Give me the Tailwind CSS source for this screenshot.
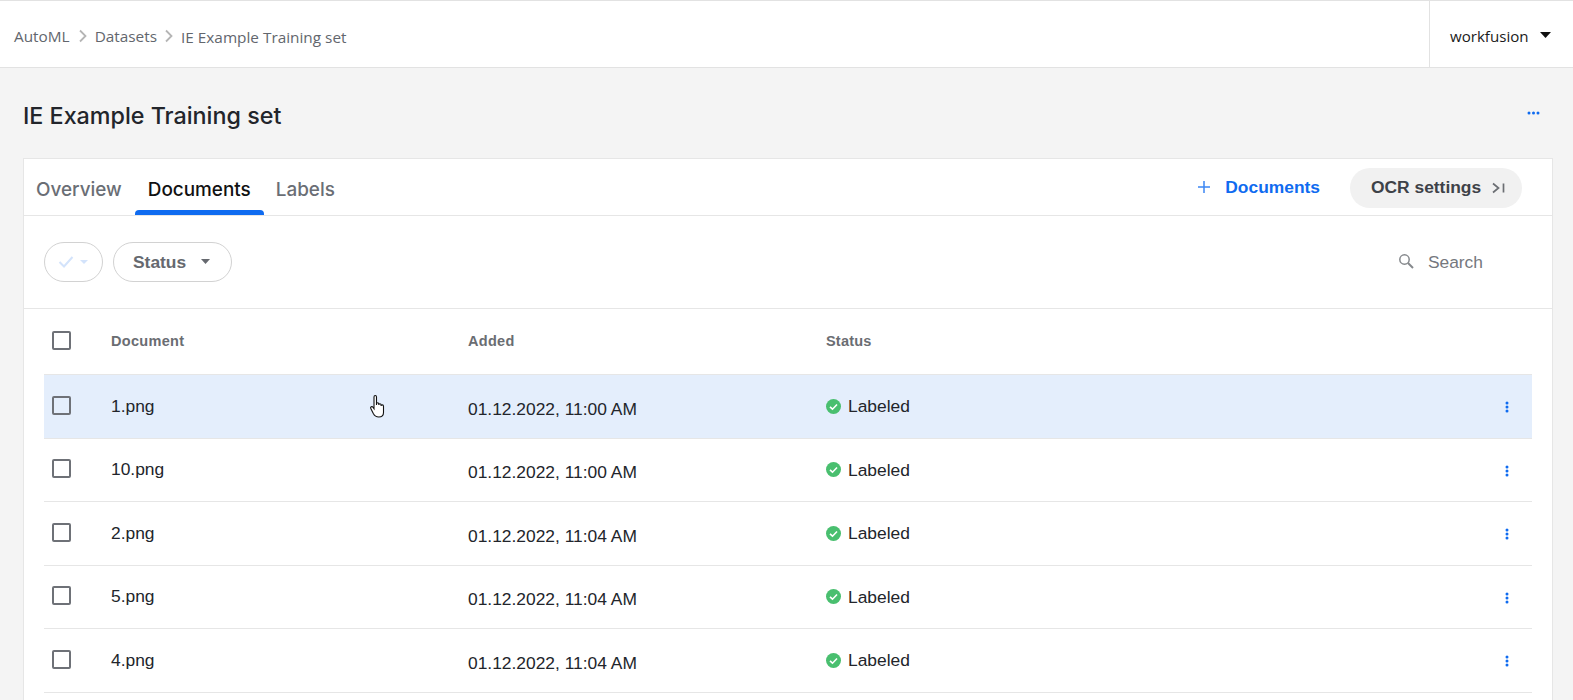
<!DOCTYPE html>
<html lang="en">
<head>
    <meta charset="UTF-8">
    <title>IE Example Training set</title>
    <script src="https://cdn.jsdelivr.net/npm/@tailwindcss/browser@4"></script>
</head>
<body class="bg-[#f4f4f4] h-[700px] overflow-hidden font-['Liberation_Sans',sans-serif] text-[#22252b]">
    <header class="h-[68px] bg-white border-t border-b border-[#e2e2e2] flex justify-between">
        <nav class="flex items-center pl-[14px] pt-[6px] font-['Open_Sans',sans-serif] text-[15.350px] text-[#62666d]">
            <span>AutoML</span>
            <svg class="ml-[8px] mr-[7px] mb-[3px]" width="10" height="14" viewBox="0 0 10 14" fill="none" stroke="#b5b5b5" stroke-width="1.800"><path d="M2 1.500l5.500 5.500L2 12.500"/></svg>
            <span>Datasets</span>
            <svg class="ml-[7px] mr-[7px] mb-[3px]" width="10" height="14" viewBox="0 0 10 14" fill="none" stroke="#b5b5b5" stroke-width="1.800"><path d="M2 1.500l5.500 5.500L2 12.500"/></svg>
            <span class="pt-[1px]">IE Example Training set</span>
        </nav>
        <div class="w-[144px] border-l border-[#e2e2e2] flex items-center pl-[20px] pt-[5px] font-['Open_Sans',sans-serif] text-[15.100px] text-[#1a1a1a]">
            <span>workfusion</span>
            <svg class="ml-[11px] mb-[3px]" width="11" height="6" viewBox="0 0 11 6" fill="#111"><path d="M0 0h11L5.500 6z"/></svg>
        </div>
    </header>

    <main class="pl-[23px] pr-[20px]">
        <div class="h-[90px] flex items-center justify-between">
            <h1 class="font-['Inter',sans-serif] text-[23.300px] font-medium text-[#22252b] mt-[7px]">IE Example Training set</h1>
            <svg class="mr-[13px]" width="13" height="4" viewBox="0 0 13 4" fill="#0f6bf0"><circle cx="2" cy="2" r="1.500"/><circle cx="6.500" cy="2" r="1.500"/><circle cx="11" cy="2" r="1.500"/></svg>
        </div>

        <section class="bg-white border border-[#e6e6e6] pb-[20px]">
            <div class="h-[57px] flex justify-between border-b border-[#e6e6e6]">
                <div class="flex pl-[12px] font-['Inter',sans-serif] text-[18.900px] font-medium text-[#6a6e75]">
                    <div class="flex items-center pt-[6px]">Overview</div>
                    <div class="flex items-center pt-[6px] px-[13px] ml-[13px] text-[#111] relative">Documents
                        <span class="absolute left-0 right-0 bottom-0 h-[5px] bg-[#0f6bf0] rounded-t-[4px]"></span>
                    </div>
                    <div class="flex items-center pt-[6px] ml-[12px]">Labels</div>
                </div>
                <div class="flex items-center pr-[30px] pt-[1px] gap-[30px] text-[17.400px] font-bold">
                    <div class="flex items-center gap-[14px] text-[#0f6bf0]">
                        <svg width="14" height="14" viewBox="0 0 14 14" stroke="#3d87f3" stroke-width="1.500"><path d="M7 1v12M1 7h12"/></svg>
                        <span>Documents</span>
                    </div>
                    <div class="h-[40px] w-[172px] rounded-full bg-[#f1f1f1] flex items-center pl-[21px] text-[#3e4248]">
                        <span>OCR settings</span>
                        <svg class="ml-[11px]" width="13" height="12" viewBox="0 0 13 12" fill="none" stroke="#6b6e73" stroke-width="1.700"><path d="M1 1.500L6.500 6 1 10.500M11.500 1.500v9"/></svg>
                    </div>
                </div>
            </div>

            <div class="h-[93px] flex items-center justify-between border-b border-[#e6e6e6] pl-[20px] pr-[69px] pb-[1px]">
                <div class="flex gap-[10px]">
                    <div class="w-[59px] h-[40px] rounded-full border border-[#d2d2d2] flex items-center pl-[13px]">
                        <svg width="16" height="13" viewBox="0 0 16 13" fill="none" stroke="#d3e3fb" stroke-width="2"><path d="M1.500 7l4.500 4.500L14.500 2"/></svg>
                        <svg class="ml-[6px]" width="8" height="4" viewBox="0 0 8 4" fill="#d3e3fb"><path d="M0 0h8L4 4z"/></svg>
                    </div>
                    <div class="w-[119px] h-[40px] rounded-full border border-[#d2d2d2] flex items-center pl-[19px] text-[17.400px] font-bold text-[#66696f]">
                        <span class="mt-[1px]">Status</span>
                        <svg class="ml-[15px]" width="9" height="5" viewBox="0 0 9 5" fill="#66696f"><path d="M0 0h9L4.500 5z"/></svg>
                    </div>
                </div>
                <div class="flex items-center gap-[14px] text-[17.400px] text-[#75787e]">
                    <svg width="16" height="16" viewBox="0 0 16 16" fill="none" stroke="#85888c" stroke-width="1.500"><circle cx="6.500" cy="6.500" r="4.700"/><path d="M10 10l5 5" stroke-width="2"/></svg>
                    <span class="mt-[1px]">Search</span>
                </div>
            </div>

            <div class="px-[20px]">
                <div class="h-[65px] flex items-center">
                    <span class="w-[67px] pl-[8px] mb-[2px]"><span class="block w-[19px] h-[19px] border-2 border-[#6e7177] rounded-[2px]"></span></span>
                    <span class="w-[357px] mt-[1px] text-[14.500px] tracking-[0.3px] font-bold text-[#6a6d72]">Document</span>
                    <span class="w-[358px] mt-[1px] text-[14.500px] tracking-[0.3px] font-bold text-[#6a6d72]">Added</span>
                    <span class="mt-[1px] text-[14.500px] tracking-[0.2px] font-bold text-[#6a6d72]">Status</span>
                </div>

                <div class="h-[65px] flex items-center bg-[#e4eefc] border-t border-b border-[#e6e6e6] relative">
                    <span class="w-[67px] pl-[8px] mb-[3px]"><span class="block w-[19px] h-[19px] border-2 border-[#6e7177] rounded-[2px]"></span></span>
                    <span class="w-[357px] text-[17.400px] mb-[1px]">1.png</span>
                    <span class="w-[358px] text-[17.400px] mt-[5px]">01.12.2022, 11:00 AM</span>
                    <span class="flex items-center gap-[7px] text-[17.400px]"><svg width="15" height="15" viewBox="0 0 15 15"><circle cx="7.500" cy="7.500" r="7.500" fill="#49bf6f"/><path d="M4 7.800l2.500 2.400L11 5.500" fill="none" stroke="#fff" stroke-width="1.600"/></svg>Labeled</span>
                    <svg class="ml-auto mr-[23px] mt-[1px]" width="4" height="12" viewBox="0 0 4 12" fill="#0f6bf0"><circle cx="2" cy="2" r="1.500"/><circle cx="2" cy="6" r="1.500"/><circle cx="2" cy="10" r="1.500"/></svg>
                    <svg class="absolute left-[325px] top-[19px]" width="18" height="25" viewBox="0 0 18 25" fill="#fff" stroke="#111" stroke-width="1.100"><path d="M5 3c0-2 2.500-2 2.500 0v8l0-1c0-1.600 2.300-1.600 2.300 0v1c0-1.600 2.300-1.600 2.300 0v1c0-1.500 2.400-1.500 2.400 0.300v6.200c0 3-2 4.500-4.700 4.500-2.800 0-4.300-1.300-5.500-3.500l-2.500-5c-.8-1.500 1.200-2.600 2.200-1.200l1 1.500z"/></svg>
                </div>

                <div class="h-[63px] flex items-center border-b border-[#e6e6e6]">
                    <span class="w-[67px] pl-[8px] mb-[3px]"><span class="block w-[19px] h-[19px] border-2 border-[#6e7177] rounded-[2px]"></span></span>
                    <span class="w-[357px] text-[17.400px] mb-[1px]">10.png</span>
                    <span class="w-[358px] text-[17.400px] mt-[5px]">01.12.2022, 11:00 AM</span>
                    <span class="flex items-center gap-[7px] text-[17.400px]"><svg width="15" height="15" viewBox="0 0 15 15"><circle cx="7.500" cy="7.500" r="7.500" fill="#49bf6f"/><path d="M4 7.800l2.500 2.400L11 5.500" fill="none" stroke="#fff" stroke-width="1.600"/></svg>Labeled</span>
                    <svg class="ml-auto mr-[23px] mt-[1px]" width="4" height="12" viewBox="0 0 4 12" fill="#0f6bf0"><circle cx="2" cy="2" r="1.500"/><circle cx="2" cy="6" r="1.500"/><circle cx="2" cy="10" r="1.500"/></svg>
                </div>

                <div class="h-[64px] flex items-center border-b border-[#e6e6e6]">
                    <span class="w-[67px] pl-[8px] mb-[3px]"><span class="block w-[19px] h-[19px] border-2 border-[#6e7177] rounded-[2px]"></span></span>
                    <span class="w-[357px] text-[17.400px] mb-[1px]">2.png</span>
                    <span class="w-[358px] text-[17.400px] mt-[5px]">01.12.2022, 11:04 AM</span>
                    <span class="flex items-center gap-[7px] text-[17.400px]"><svg width="15" height="15" viewBox="0 0 15 15"><circle cx="7.500" cy="7.500" r="7.500" fill="#49bf6f"/><path d="M4 7.800l2.500 2.400L11 5.500" fill="none" stroke="#fff" stroke-width="1.600"/></svg>Labeled</span>
                    <svg class="ml-auto mr-[23px] mt-[1px]" width="4" height="12" viewBox="0 0 4 12" fill="#0f6bf0"><circle cx="2" cy="2" r="1.500"/><circle cx="2" cy="6" r="1.500"/><circle cx="2" cy="10" r="1.500"/></svg>
                </div>

                <div class="h-[63px] flex items-center border-b border-[#e6e6e6]">
                    <span class="w-[67px] pl-[8px] mb-[3px]"><span class="block w-[19px] h-[19px] border-2 border-[#6e7177] rounded-[2px]"></span></span>
                    <span class="w-[357px] text-[17.400px] mb-[1px]">5.png</span>
                    <span class="w-[358px] text-[17.400px] mt-[5px]">01.12.2022, 11:04 AM</span>
                    <span class="flex items-center gap-[7px] text-[17.400px]"><svg width="15" height="15" viewBox="0 0 15 15"><circle cx="7.500" cy="7.500" r="7.500" fill="#49bf6f"/><path d="M4 7.800l2.500 2.400L11 5.500" fill="none" stroke="#fff" stroke-width="1.600"/></svg>Labeled</span>
                    <svg class="ml-auto mr-[23px] mt-[1px]" width="4" height="12" viewBox="0 0 4 12" fill="#0f6bf0"><circle cx="2" cy="2" r="1.500"/><circle cx="2" cy="6" r="1.500"/><circle cx="2" cy="10" r="1.500"/></svg>
                </div>

                <div class="h-[64px] flex items-center border-b border-[#e6e6e6]">
                    <span class="w-[67px] pl-[8px] mb-[3px]"><span class="block w-[19px] h-[19px] border-2 border-[#6e7177] rounded-[2px]"></span></span>
                    <span class="w-[357px] text-[17.400px] mb-[1px]">4.png</span>
                    <span class="w-[358px] text-[17.400px] mt-[5px]">01.12.2022, 11:04 AM</span>
                    <span class="flex items-center gap-[7px] text-[17.400px]"><svg width="15" height="15" viewBox="0 0 15 15"><circle cx="7.500" cy="7.500" r="7.500" fill="#49bf6f"/><path d="M4 7.800l2.500 2.400L11 5.500" fill="none" stroke="#fff" stroke-width="1.600"/></svg>Labeled</span>
                    <svg class="ml-auto mr-[23px] mt-[1px]" width="4" height="12" viewBox="0 0 4 12" fill="#0f6bf0"><circle cx="2" cy="2" r="1.500"/><circle cx="2" cy="6" r="1.500"/><circle cx="2" cy="10" r="1.500"/></svg>
                </div>
            </div>
        </section>
    </main>
</body>
</html>
